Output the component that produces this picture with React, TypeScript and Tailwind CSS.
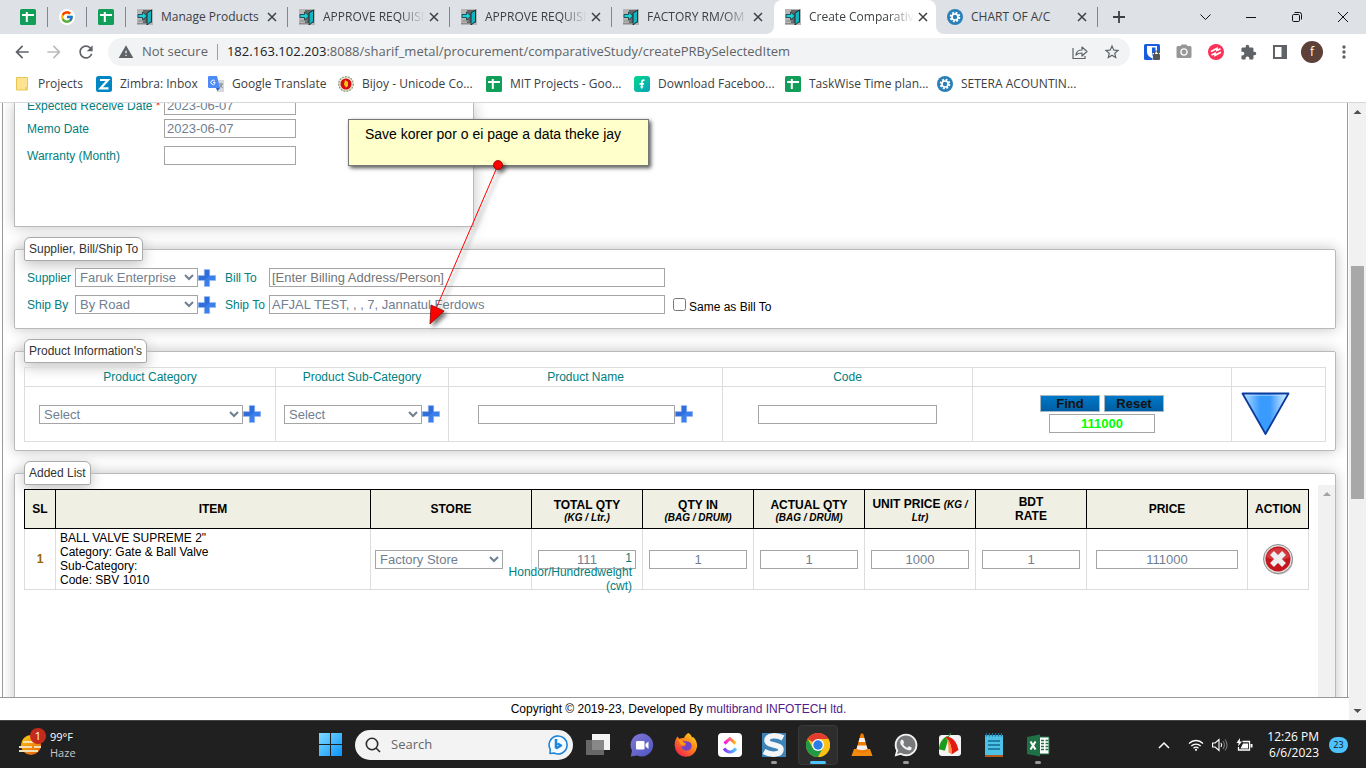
import React from "react";
import { FcGoogle } from "react-icons/fc";
import { FaWhatsapp } from "react-icons/fa";
import {
  MdArrowBack,
  MdArrowForward,
  MdRefresh,
  MdWarning,
  MdStarOutline,
  MdExtension,
  MdMoreVert,
  MdPhotoCamera,
} from "react-icons/md";

const inputClass =
  "h-[19px] border border-[#a5a5a5] bg-white text-[13px] leading-4 text-[#708090] outline-none";

const SheetIcon = () => (
  <svg viewBox="0 0 16 16" className="size-4 shrink-0">
    <rect width="16" height="16" rx="1.5" fill="#119e59" />
    <path d="M2 6h12M6.8 3v10" stroke="#fff" strokeWidth="2" />
  </svg>
);

const DoorIcon = () => (
  <svg viewBox="0 0 16 16" className="size-4 shrink-0">
    <rect width="16" height="16" fill="#b5b5b5" />
    <path d="M6 1h9v13H6z" fill="#666" />
    <path d="M10 4l4.500-3v11.500L10 16z" fill="#12b5bd" stroke="#10262a" strokeWidth=".9" />
    <path d="M1 5.500h4.500V3L10 7l-4.500 4V8.500H1z" fill="#19d3dc" stroke="#17343a" strokeWidth=".8" />
    <path d="M1 12h7M0 14.500h9" stroke="#8a8a8a" />
  </svg>
);

const GearIcon = () => (
  <svg viewBox="0 0 16 16" className="size-4 shrink-0">
    <circle cx="8" cy="8" r="8" fill="#2980b9" />
    <circle cx="8" cy="8" r="4.300" fill="none" stroke="#fff" strokeWidth="2" strokeDasharray="1.900 1.477" />
    <circle cx="8" cy="8" r="3" fill="none" stroke="#fff" strokeWidth="1.600" />
  </svg>
);

const CloseIcon = () => (
  <svg viewBox="0 0 10 10" className="size-[10px]">
    <path d="M1 1l8 8M9 1L1 9" stroke="#3c4043" strokeWidth="1.500" fill="none" />
  </svg>
);

const PlusButton = ({ label }: { label: string }) => (
  <button type="button" aria-label={label} className="size-[18px] shrink-0">
    <svg viewBox="0 0 18 18" className="size-[18px]">
      <path d="M6.300.5h5.400v6h6v5h-6v6H6.300v-6h-6v-5h6z" fill="#3b7fea" stroke="#9dbcf0" strokeWidth=".6" />
      <path d="M6.800 1h4.400v6L6.800 11H.8V7h6z" fill="#2c62cf" opacity=".6" />
    </svg>
  </button>
);

interface TabProps {
  title: string;
  icon: React.ReactNode;
  active?: boolean;
  divider?: boolean;
  faded?: boolean;
}

const Tab: React.FC<TabProps> = ({ title, icon, active, divider, faded }) => (
  <div
    className={`relative flex h-[34px] w-[162px] shrink-0 items-center pl-[11px] pr-[11px] ${
      active ? "rounded-t-lg bg-white" : ""
    }`}
  >
    {active && (
      <>
        <span className="absolute bottom-0 -left-2 size-2 bg-white">
          <span className="block size-2 rounded-br-lg bg-[#dee1e6]" />
        </span>
        <span className="absolute bottom-0 -right-2 size-2 bg-white">
          <span className="block size-2 rounded-bl-lg bg-[#dee1e6]" />
        </span>
      </>
    )}
    {icon}
    <span
      className={`ml-2 flex-1 text-xs whitespace-nowrap text-[#3c4043] ${
        faded ? "[mask-image:linear-gradient(to_right,#000_75%,transparent)]" : ""
      }`}
    >
      {title}
    </span>
    <button type="button" aria-label={`Close ${title}`} className="ml-1">
      <CloseIcon />
    </button>
    {divider && <span className="absolute right-0 h-5 w-px bg-[#80868b]" />}
  </div>
);

const PinnedTab = ({ children }: { children: React.ReactNode }) => (
  <div className="flex h-5 w-[39px] shrink-0 items-center justify-center border-r border-[#80868b]">
    {children}
  </div>
);

const bookmarks = [
  {
    label: "Projects",
    width: "w-20",
    icon: (
      <svg viewBox="0 0 14 16" className="h-4 w-[14px]">
        <path d="M.5 1.500h11V14H.5z" fill="#fee391" stroke="#e9c44f" />
        <path d="M9 11h3v3H9z" fill="#f3cf5b" />
      </svg>
    ),
  },
  {
    label: "Zimbra: Inbox",
    width: "w-28",
    icon: (
      <svg viewBox="0 0 16 16" className="size-4">
        <rect width="16" height="16" rx="2.500" fill="#0087c3" />
        <path d="M4 4h8l-7.500 8.300H12.500" fill="none" stroke="#fff" strokeWidth="2.200" />
      </svg>
    ),
  },
  {
    label: "Google Translate",
    width: "w-[130px]",
    icon: (
      <svg viewBox="0 0 16 16" className="size-4">
        <path d="M6 4h10v12H9z" fill="#d5d8dc" />
        <path d="M1 0h8l3 12H1a1 1 0 0 1-1-1V1a1 1 0 0 1 1-1z" fill="#4c8bf5" />
        <path d="M8 12h4l-2.500 3z" fill="#2a5bc0" />
        <path d="M7 5.200A2.200 2.200 0 1 0 7 7.500V6.400H5" fill="none" stroke="#fff" />
        <path d="M11 8h4M13 7v1M14 8c-.3 2-1.500 3-2.500 3.500M12 9l2.500 3" stroke="#76828e" strokeWidth=".9" fill="none" />
      </svg>
    ),
  },
  {
    label: "Bijoy - Unicode Co...",
    width: "w-[148px]",
    icon: (
      <svg viewBox="0 0 16 16" className="size-4">
        <circle cx="8" cy="8" r="7.300" fill="#e8e3cd" stroke="#8c9a80" strokeWidth="1.200" strokeDasharray="2 1" />
        <circle cx="8" cy="8" r="5.500" fill="#d70b10" />
        <path d="M7 4l3 2v4l-2 1.500-2-3z" fill="#f5c913" />
      </svg>
    ),
  },
  { label: "MIT Projects - Goo...", width: "w-[148px]", icon: <SheetIcon /> },
  {
    label: "Download Faceboo...",
    width: "w-[151px]",
    icon: (
      <svg viewBox="0 0 16 16" className="size-4">
        <defs>
          <linearGradient id="fb" x1="0" y1="0" x2="1" y2="1">
            <stop stopColor="#00d98b" />
            <stop offset="1" stopColor="#0aa1b8" />
          </linearGradient>
        </defs>
        <rect width="16" height="16" rx="3" fill="url(#fb)" />
        <path d="M10.500 4.500C8.500 3.600 7.800 5 7.800 6.500V11M5.500 7.800h4.500" stroke="#fff" strokeWidth="1.700" fill="none" />
        <path d="M6 10.500h3.600L7.800 13z" fill="#fff" />
      </svg>
    ),
  },
  { label: "TaskWise Time plan...", width: "w-[152px]", icon: <SheetIcon /> },
  { label: "SETERA ACOUNTIN...", width: "w-[152px]", icon: <GearIcon /> },
];

const ToolButton = ({ label, children }: { label: string; children: React.ReactNode }) => (
  <button
    type="button"
    aria-label={label}
    className="flex size-8 shrink-0 items-center justify-center text-[#5f6368]"
  >
    {children}
  </button>
);

const Browser = () => (
  <header className="shrink-0 border-b border-[#d5d7da] bg-white font-['Open_Sans',sans-serif]">
    <div className="flex h-[34px] items-center bg-[#dee1e6] pl-[9px]">
      <PinnedTab>
        <SheetIcon />
      </PinnedTab>
      <PinnedTab>
        <span className="flex size-4 items-center justify-center rounded-full bg-white">
          <FcGoogle size={14} />
        </span>
      </PinnedTab>
      <PinnedTab>
        <SheetIcon />
      </PinnedTab>
      <Tab title="Manage Products" icon={<DoorIcon />} divider />
      <Tab title="APPROVE REQUISI" icon={<DoorIcon />} divider faded />
      <Tab title="APPROVE REQUISI" icon={<DoorIcon />} divider faded />
      <Tab title="FACTORY RM/OM" icon={<DoorIcon />} faded />
      <Tab title="Create Comparativ" icon={<DoorIcon />} active faded />
      <Tab title="CHART OF A/C" icon={<GearIcon />} divider />
      <button type="button" aria-label="New tab" className="flex w-[42px] shrink-0 justify-center">
        <svg viewBox="0 0 12 12" className="size-3">
          <path d="M6 0v12M0 6h12" stroke="#3c4043" strokeWidth="1.800" />
        </svg>
      </button>
      <div className="ml-auto flex h-7 items-center">
        <button type="button" aria-label="Search tabs" className="flex w-[46px] justify-center">
          <svg viewBox="0 0 11 7" className="h-[7px] w-[11px]">
            <path d="M.5.5l5 5 5-5" stroke="#111" fill="none" />
          </svg>
        </button>
        <button type="button" aria-label="Minimize" className="flex w-[46px] justify-center">
          <svg viewBox="0 0 10 10" className="size-[10px]">
            <path d="M0 5.500h10" stroke="#111" />
          </svg>
        </button>
        <button type="button" aria-label="Restore" className="flex w-[46px] justify-center">
          <svg viewBox="0 0 10 10" className="size-[10px]" fill="none" stroke="#111">
            <rect x=".5" y="2.500" width="7" height="7" rx="1.200" />
            <path d="M2.500.5h5a2 2 0 0 1 2 2v5" />
          </svg>
        </button>
        <button type="button" aria-label="Close window" className="flex w-[46px] justify-center">
          <svg viewBox="0 0 10 10" className="size-[10px]">
            <path d="M0 0l10 10M10 0L0 10" stroke="#111" />
          </svg>
        </button>
      </div>
    </div>

    <div className="flex h-9 items-center pl-[6px] pr-[6px]">
      <ToolButton label="Back">
        <MdArrowBack size={20} />
      </ToolButton>
      <ToolButton label="Forward">
        <MdArrowForward size={20} className="text-[#babcbe]" />
      </ToolButton>
      <ToolButton label="Reload">
        <MdRefresh size={20} />
      </ToolButton>
      <div className="mx-[6px] flex h-7 flex-1 items-center rounded-full bg-[#f1f3f4] pl-[10px] pr-[2px] text-[13px] text-[#5f6368]">
        <MdWarning size={16} />
        <span className="ml-2">Not secure</span>
        <span className="mx-[9px] h-4 w-px bg-[#9aa0a6]" />
        <span className="flex-1 whitespace-nowrap">
          <span className="text-[#202124]">182.163.102.203</span>
          :8088/sharif_metal/procurement/comparativeStudy/createPRBySelectedItem
        </span>
        <ToolButton label="Share">
          <svg viewBox="0 0 16 16" className="size-4" fill="none" stroke="#5f6368" strokeWidth="1.200">
            <path d="M1 4v10.500h12V12" />
            <path d="M4 11c.3-3.500 2.500-5 6-5V3l5 4.500L10 12V9c-3 0-4.600.5-6 2z" strokeLinejoin="round" />
          </svg>
        </ToolButton>
        <ToolButton label="Bookmark">
          <MdStarOutline size={18} />
        </ToolButton>
      </div>
      <ToolButton label="Password manager">
        <svg viewBox="0 0 16 16" className="size-4">
          <rect width="16" height="16" rx="1.500" fill="#175ddc" />
          <path d="M3 2h10v6c0 3.500-3 5.300-5 6.200C6 13.300 3 11.500 3 8z" fill="#fff" />
          <path d="M8 3.500h3.500V8c0 2-1.500 3.500-3.500 4.500z" fill="#175ddc" />
          <path d="M8.500 9H16v7H8.500z" fill="#fff" />
          <rect x="9" y="10" width="7" height="6" rx="1" fill="#555" />
          <path d="M10.500 10.500V9a2 2 0 0 1 4 0v1.500" fill="none" stroke="#555" strokeWidth="1.200" />
        </svg>
      </ToolButton>
      <ToolButton label="Screenshot">
        <MdPhotoCamera size={18} className="text-[#979797]" />
      </ToolButton>
      <ToolButton label="Recorder">
        <svg viewBox="0 0 16 16" className="size-4">
          <circle cx="8" cy="8" r="8" fill="#fb3158" />
          <path d="M3 7.500L9 4.500v2l3.500-1.700M3.500 11L7 9.300v2l6-3" stroke="#fff" strokeWidth="1.700" fill="none" />
        </svg>
      </ToolButton>
      <ToolButton label="Extensions">
        <MdExtension size={17} />
      </ToolButton>
      <ToolButton label="Side panel">
        <svg viewBox="0 0 14 14" className="size-[14px]">
          <path d="M1 1h12v12H1z" fill="none" stroke="#5f6368" strokeWidth="2" />
          <path d="M8.500 1H13v12H8.500z" fill="#5f6368" />
        </svg>
      </ToolButton>
      <ToolButton label="Profile">
        <span className="flex size-[22px] items-center justify-center rounded-full bg-[#5d4037] text-xs text-white">
          f
        </span>
      </ToolButton>
      <ToolButton label="Menu">
        <MdMoreVert size={20} />
      </ToolButton>
    </div>

    <nav className="flex h-8 items-center overflow-hidden pb-1 pl-4">
      {bookmarks.map((b) => (
        <a
          key={b.label}
          href="#"
          className={`flex shrink-0 items-center gap-2 text-xs whitespace-nowrap text-[#3c4043] ${b.width}`}
        >
          {b.icon}
          {b.label}
        </a>
      ))}
    </nav>
  </header>
);

interface PanelProps {
  title: string;
  className: string;
  children: React.ReactNode;
}

const Panel: React.FC<PanelProps> = ({ title, className, children }) => (
  <fieldset
    className={`rounded-xs border border-[#b9b9b9] bg-white pl-[9px] shadow-[0_0_14px_#c2c2c2] ${className}`}
  >
    <legend className="h-6 rounded-t-md rounded-b-xs border border-[#aaa] bg-white px-1 text-xs leading-[22px] text-[#333] shadow-[0_4px_14px_#c2c2c2]">
      {title}
    </legend>
    {children}
  </fieldset>
);

const DateRow = ({ id, label, value, required }: { id: string; label: string; value: string; required?: boolean }) => (
  <div className="flex items-center">
    <label htmlFor={id} className="w-[137px] text-xs whitespace-nowrap text-[#008080]">
      {label}
      {required && <span className="text-red-500"> *</span>}
    </label>
    <input id={id} defaultValue={value} className={`${inputClass} w-[132px] px-[2px]`} />
  </div>
);

const SupplierPanel = () => (
  <Panel title="Supplier, Bill/Ship To" className="pt-[3px] pb-[10px]">
    <div className="flex h-[27px] items-center pl-[3px] text-xs text-[#008080]">
      <label htmlFor="supplier" className="w-12">
        Supplier
      </label>
      <select id="supplier" className={`${inputClass} w-[123px]`}>
        <option>Faruk Enterprise</option>
      </select>
      <PlusButton label="Add supplier" />
      <label htmlFor="bill" className="ml-[9px] w-11">
        Bill To
      </label>
      <input
        id="bill"
        placeholder="[Enter Billing Address/Person]"
        className={`${inputClass} w-[396px] px-[2px] placeholder:text-[#757575]`}
      />
    </div>
    <div className="flex h-[27px] items-center pl-[3px] text-xs text-[#008080]">
      <label htmlFor="shipBy" className="w-12">
        Ship By
      </label>
      <select id="shipBy" className={`${inputClass} w-[123px]`}>
        <option>By Road</option>
      </select>
      <PlusButton label="Add ship by" />
      <label htmlFor="ship" className="ml-[9px] w-11">
        Ship To
      </label>
      <input
        id="ship"
        defaultValue="AFJAL TEST, , , 7, Jannatul Ferdows"
        className={`${inputClass} w-[396px] px-[2px]`}
      />
      <input id="same" type="checkbox" className="ml-2 size-[13px]" />
      <label htmlFor="same" className="ml-[3px] pt-1 text-black">
        Same as Bill To
      </label>
    </div>
  </Panel>
);

const ProductPanel = () => (
  <Panel title="Product Information's" className="pt-1 pr-[9px] pb-2">
    <table className="w-full table-fixed border-collapse text-xs text-[#008080] [&_td]:border [&_td]:border-[#ddd] [&_td]:p-0 [&_th]:border [&_th]:border-[#ddd] [&_th]:font-normal">
      <colgroup>
        <col className="w-[251px]" />
        <col className="w-[173px]" />
        <col />
        <col className="w-[250px]" />
        <col className="w-[259px]" />
        <col className="w-[94px]" />
      </colgroup>
      <thead>
        <tr className="h-[19px] leading-4">
          <th>Product Category</th>
          <th>Product Sub-Category</th>
          <th>Product Name</th>
          <th>Code</th>
          <th />
          <th />
        </tr>
      </thead>
      <tbody>
        <tr className="h-[55px]">
          <td>
            <div className="flex justify-center">
              <select aria-label="Product Category" className={`${inputClass} w-[204px]`}>
                <option>Select</option>
              </select>
              <PlusButton label="Add category" />
            </div>
          </td>
          <td>
            <div className="flex justify-center">
              <select aria-label="Product Sub-Category" className={`${inputClass} w-[138px]`}>
                <option>Select</option>
              </select>
              <PlusButton label="Add sub-category" />
            </div>
          </td>
          <td>
            <div className="flex justify-center">
              <input aria-label="Product Name" className={`${inputClass} w-[197px] px-[2px]`} />
              <PlusButton label="Add product" />
            </div>
          </td>
          <td>
            <div className="flex justify-center">
              <input aria-label="Code" className={`${inputClass} w-[179px] px-[2px]`} />
            </div>
          </td>
          <td>
            <div className="flex flex-col items-center gap-[2px]">
              <div className="flex gap-1">
                {["Find", "Reset"].map((name) => (
                  <button
                    key={name}
                    type="button"
                    className="h-[17px] w-[60px] border border-[#a5b8c8] bg-linear-to-b from-[#0078c8] to-[#005fa3] text-[13px] leading-[15px] font-bold text-[#111]"
                  >
                    {name}
                  </button>
                ))}
              </div>
              <input
                aria-label="Total"
                defaultValue="111000"
                className="h-[19px] w-[106px] border border-[#a5a5a5] text-center text-[13px] leading-4 font-bold text-[#00ff00]"
              />
            </div>
          </td>
          <td>
            <button type="button" aria-label="Add to list" className="ml-[9px] block">
              <svg viewBox="0 0 50 44" className="h-11 w-[50px]">
                <defs>
                  <linearGradient id="tri">
                    <stop stopColor="#b9e2ff" />
                    <stop offset=".38" stopColor="#3a9bff" />
                    <stop offset=".6" stopColor="#3a9bff" />
                    <stop offset="1" stopColor="#e8f5ff" />
                  </linearGradient>
                </defs>
                <path d="M1.500 1.500h46L24.500 42z" fill="url(#tri)" stroke="#0b3b9e" strokeWidth="1.800" strokeLinejoin="round" />
                <path d="M4.500 3.300h40" stroke="#bfe2ff" opacity=".7" />
              </svg>
            </button>
          </td>
        </tr>
      </tbody>
    </table>
  </Panel>
);

const qtyFields = [
  { name: "Qty in", value: "1" },
  { name: "Actual qty", value: "1" },
  { name: "Unit price", value: "1000" },
  { name: "BDT rate", value: "1" },
];

const UnitHeader = ({ title, unit }: { title: string; unit: string }) => (
  <th>
    <span className="block pt-[3px]">{title}</span>
    <i className="block text-[10px] leading-3">{unit}</i>
  </th>
);

const AddedListPanel = () => (
  <Panel title="Added List" className="h-80">
    <div className="flex h-72">
      <div className="mr-[9px] flex-1 pt-1">
        <table className="w-full table-fixed border-collapse text-xs leading-[14px] text-black [&_td]:border [&_td]:border-[#ddd] [&_th]:border [&_th]:border-black [&_th]:p-0">
          <colgroup>
            <col className="w-[31px]" />
            <col />
            <col className="w-[161px]" />
            <col className="w-[111px]" />
            <col className="w-[111px]" />
            <col className="w-[111px]" />
            <col className="w-[111px]" />
            <col className="w-[111px]" />
            <col className="w-[161px]" />
            <col className="w-[61px]" />
          </colgroup>
          <thead className="bg-[#efefe3]">
            <tr className="h-[39px]">
              <th>SL</th>
              <th>ITEM</th>
              <th>STORE</th>
              <UnitHeader title="TOTAL QTY" unit="(KG / Ltr.)" />
              <UnitHeader title="QTY IN" unit="(BAG / DRUM)" />
              <UnitHeader title="ACTUAL QTY" unit="(BAG / DRUM)" />
              <th>
                <span className="block pt-[3px] whitespace-nowrap">
                  UNIT PRICE <i className="text-[10px]">(KG /</i>
                </span>
                <i className="block text-[10px] leading-3">Ltr)</i>
              </th>
              <th>
                BDT
                <br />
                RATE
              </th>
              <th>PRICE</th>
              <th>ACTION</th>
            </tr>
          </thead>
          <tbody>
            <tr className="h-[61px] text-center">
              <td className="font-bold text-[#966400]">1</td>
              <td className="px-1 text-left">
                BALL VALVE SUPREME 2&quot;
                <br />
                Category: Gate &amp; Ball Valve
                <br />
                Sub-Category:
                <br />
                Code: SBV 1010
              </td>
              <td className="px-1 text-left">
                <select aria-label="Store" className={`${inputClass} block w-32`}>
                  <option>Factory Store</option>
                </select>
              </td>
              <td>
                <div className="relative">
                  <input
                    aria-label="Total qty"
                    defaultValue="111"
                    className={`${inputClass} mx-auto block w-[98px] text-center`}
                  />
                  <div className="absolute top-px right-[10px] text-right text-[#008080]">
                    1<br />
                    Hondor/Hundredweight
                    <br />
                    (cwt)
                  </div>
                </div>
              </td>
              {qtyFields.map((f) => (
                <td key={f.name}>
                  <input
                    aria-label={f.name}
                    defaultValue={f.value}
                    className={`${inputClass} mx-auto block w-[98px] text-center`}
                  />
                </td>
              ))}
              <td>
                <input
                  aria-label="Price"
                  defaultValue="111000"
                  className={`${inputClass} mx-auto block w-[142px] text-center`}
                />
              </td>
              <td className="p-0">
                <button type="button" aria-label="Remove item" className="mx-auto block">
                  <svg viewBox="0 0 32 32" className="size-8">
                    <circle cx="16.500" cy="17" r="14.500" fill="#bbb" />
                    <circle cx="16" cy="16" r="14.500" fill="#ddd" stroke="#8e8e8e" />
                    <circle cx="16" cy="16" r="12.500" fill="#c4161c" />
                    <path d="M4 14a12.500 12.500 0 0 1 24 0c-7 4-17 4-24 0z" fill="#e0595c" opacity=".55" />
                    <path d="M10 10l12 12M22 10L10 22" stroke="#eee" strokeWidth="5.500" />
                  </svg>
                </button>
              </td>
            </tr>
          </tbody>
        </table>
      </div>
      <div className="flex w-[17px] justify-center bg-[#f1f1f1] pt-[7px]" aria-hidden="true">
        <svg viewBox="0 0 8 4" className="h-1 w-2">
          <path d="M0 4l4-4 4 4z" fill="#a3a3a3" />
        </svg>
      </div>
    </div>
  </Panel>
);

const Annotation = () => (
  <>
    <div className="absolute top-4 left-[348px] h-[47px] w-[301px] border border-[#777] bg-[#ffffcc] pl-4 pt-1 text-sm text-black shadow-[2px_2px_4px_#555]">
      Save korer por o ei page a data theke jay
    </div>
    <svg viewBox="0 0 90 180" className="absolute top-[52px] left-[420px] h-[180px] w-[90px]">
      <g className="drop-shadow-[3px_3px_2px_#0008]">
        <path d="M78 10L15 156" stroke="#f00" />
        <circle cx="78" cy="10" r="4.500" fill="#f00" stroke="#8c0000" strokeWidth=".8" />
        <path d="M10 169l1-19 13 6z" fill="#f00" stroke="#8c0000" strokeWidth=".8" />
      </g>
    </svg>
  </>
);

const PageScrollbar = () => (
  <div className="flex w-[17px] shrink-0 flex-col items-center bg-[#f1f1f1]" aria-hidden="true">
    <svg viewBox="0 0 17 17" className="size-[17px] shrink-0">
      <path d="M4.500 11l4-4 4 4z" fill="#505050" />
    </svg>
    <div className="w-full flex-1">
      <div className="h-1/4" />
      <div className="mx-auto h-2/5 w-[13px] bg-[#a8a8a8]" />
    </div>
    <svg viewBox="0 0 17 17" className="size-[17px] shrink-0">
      <path d="M4.500 6l4 4 4-4z" fill="#505050" />
    </svg>
  </div>
);

const TaskIcon = ({
  label,
  state,
  children,
}: {
  label: string;
  state?: "open" | "active";
  children: React.ReactNode;
}) => (
  <button
    type="button"
    aria-label={label}
    className="relative flex h-12 w-11 shrink-0 items-center justify-center"
  >
    <span
      className={`flex size-10 items-center justify-center rounded ${
        state === "active" ? "border border-[#393939] bg-[#2d2d2d]" : ""
      }`}
    >
      {children}
    </span>
    {state === "open" && <span className="absolute bottom-[5px] h-[3px] w-[6px] rounded-full bg-[#9a9a9a]" />}
    {state === "active" && <span className="absolute bottom-[5px] h-[3px] w-4 rounded-full bg-[#4cc2ff]" />}
  </button>
);

const Taskbar = () => (
  <footer className="flex h-12 shrink-0 items-center border-t border-[#444] bg-[#202020] font-['Open_Sans',sans-serif] text-white">
    <div className="flex flex-1 items-center pl-[18px]">
      <svg viewBox="0 0 28 30" className="mb-[6px] h-[30px] w-7">
        <defs>
          <linearGradient id="sun" x1="0" y1="0" x2=".6" y2="1">
            <stop stopColor="#fcd116" />
            <stop offset="1" stopColor="#e96a0b" />
          </linearGradient>
        </defs>
        <circle cx="13" cy="18" r="10" fill="url(#sun)" />
        <path d="M5 15h15M1 20h13M16 20h7M1 24h19" stroke="#f5deb0" strokeWidth="1.800" />
        <circle cx="20" cy="9" r="8" fill="#c42b1c" />
        <text x="20" y="13" fontSize="11" fill="#fff" textAnchor="middle">
          1
        </text>
      </svg>
      <div className="ml-1 text-[11px] leading-4">
        <div>99°F</div>
        <div className="text-[#c8c8c8]">Haze</div>
      </div>
    </div>

    <div className="flex shrink-0 items-center pl-[2px]">
      <TaskIcon label="Start">
        <svg viewBox="0 0 23 23" className="size-[23px]">
          <defs>
            <linearGradient id="win" x1="0" y1="0" x2="1" y2="1">
              <stop stopColor="#7fdcff" />
              <stop offset="1" stopColor="#0a93ff" />
            </linearGradient>
          </defs>
          <path d="M0 0h11v11H0zM12 0h11v11H12zM0 12h11v11H0zM12 12h11v11H12z" fill="url(#win)" />
        </svg>
      </TaskIcon>
      <div className="mx-[3px] flex h-[30px] w-[218px] items-center rounded-full bg-[#f3f3f3] pr-1 pl-[10px]">
        <svg viewBox="0 0 16 16" className="size-4 shrink-0" fill="none" stroke="#2b2b2b" strokeWidth="1.600">
          <circle cx="7" cy="7" r="5.700" />
          <path d="M11 11l4 4" />
        </svg>
        <input
          aria-label="Search"
          placeholder="Search"
          className="ml-[10px] min-w-0 flex-1 text-[13px] outline-none placeholder:text-[#666]"
        />
        <svg viewBox="0 0 22 22" className="size-[22px] shrink-0">
          <path d="M3 19.500l.3-4A9 9 0 1 1 7 19z" fill="#f5fbff" stroke="#1d84d8" strokeWidth="1.600" strokeLinejoin="round" />
          <path d="M9 5v9.500M9 14.500l5-3-3.500-2" fill="none" stroke="#1b86dc" strokeWidth="2.500" strokeLinejoin="round" />
        </svg>
      </div>
      <TaskIcon label="Task view">
        <svg viewBox="0 0 24 22" className="h-[22px] w-6">
          <path d="M6 0h18v16H6z" fill="#f3f3f3" />
          <path d="M0 6h18v15H0z" fill="#747474" opacity=".85" />
        </svg>
      </TaskIcon>
      <TaskIcon label="Chat">
        <svg viewBox="0 0 24 24" className="size-6">
          <defs>
            <linearGradient id="chat" x1="0" y1="0" x2="1" y2="1">
              <stop stopColor="#8178d4" />
              <stop offset="1" stopColor="#4f55c4" />
            </linearGradient>
          </defs>
          <path d="M12 .5A11.500 11.500 0 1 1 7 22.500L.8 23.500 2 17.500A11.500 11.500 0 0 1 12 .5z" fill="url(#chat)" />
          <rect x="6" y="8" width="8.500" height="8.500" rx="1.300" fill="#fff" />
          <path d="M15.500 11l3-2.500v7.500l-3-2.500z" fill="#fff" />
        </svg>
      </TaskIcon>
      <TaskIcon label="Firefox">
        <svg viewBox="0 0 24 24" className="size-6">
          <defs>
            <linearGradient id="fox" x1="1" y1="0" x2=".2" y2="1">
              <stop stopColor="#ffe226" />
              <stop offset=".45" stopColor="#ff8a16" />
              <stop offset="1" stopColor="#f0204f" />
            </linearGradient>
          </defs>
          <path d="M14.500 0c2 1 3 3 3.500 4.200 1-.1 1.500 0 1.500 0C22 7 23.500 10 23 14a11.200 11.200 0 0 1-22.300-1C.5 9 1.500 6 3.500 3.500L5.500 6C7 4.800 8.500 4.800 10 5c1-2.500 2.500-4 4.500-5z" fill="url(#fox)" />
          <path d="M8.500 8c3 .7 7.500-.5 9 3.500 1 5-4 7.500-7.500 5.500-2-1-2.500-2.500-2.500-4 2 1 3.500.5 4.500-1.500-2-.5-3.500-1.500-3.500-3.500z" fill="#7542c4" />
          <path d="M4 6c2 0 4 1 5 3l3 1.500c-1 1.500-3 1.500-4.500 2-1-2-3-4-3.500-6.500z" fill="#ff9a1c" />
        </svg>
      </TaskIcon>
      <TaskIcon label="ClickUp">
        <svg viewBox="0 0 24 24" className="size-6" fill="none" strokeWidth="3">
          <defs>
            <linearGradient id="cu1">
              <stop stopColor="#ff02f0" />
              <stop offset="1" stopColor="#ffc800" />
            </linearGradient>
            <linearGradient id="cu2">
              <stop stopColor="#8930fd" />
              <stop offset="1" stopColor="#49ccf9" />
            </linearGradient>
          </defs>
          <rect width="24" height="24" rx="4" fill="#fff" />
          <path d="M6.500 10.500L12 5.700l5.500 4.800" stroke="url(#cu1)" />
          <path d="M6 15.500c3.500 4.500 8.500 4.500 12 0" stroke="url(#cu2)" />
        </svg>
      </TaskIcon>
      <TaskIcon label="Snagit" state="open">
        <svg viewBox="0 0 24 24" className="size-6">
          <rect width="24" height="24" fill="#3d83b8" />
          <path d="M21 5C15 1.500 5 2 5 7.500S19 11 19 16.500 9 22.500 2 18.500" fill="none" stroke="#f3f5f7" strokeWidth="5.500" />
        </svg>
      </TaskIcon>
      <TaskIcon label="Chrome" state="active">
        <svg viewBox="0 0 24 24" className="size-6">
          <circle cx="12" cy="12" r="12" fill="#fbc116" />
          <path d="M12 12L1.600 6A12 12 0 0 1 22.400 6z" fill="#e33b2e" />
          <path d="M1.600 6A12 12 0 0 0 12 24l5.200-9L12 12 6.800 15z" fill="#229a45" />
          <path d="M12 6h10.400A12 12 0 0 1 12 24l5.200-9z" fill="#fbc116" />
          <circle cx="12" cy="12" r="6" fill="#fff" />
          <circle cx="12" cy="12" r="4.700" fill="#2a7de8" />
        </svg>
      </TaskIcon>
      <TaskIcon label="VLC">
        <svg viewBox="0 0 22 24" className="h-6 w-[22px]">
          <path d="M3 16h16l2.500 7H.5z" fill="#f28a10" />
          <path d="M11 .5c1 0 1.300.5 1.500 1L17 18c-2 2.500-10 2.500-12 0L9.500 1.500c.2-.5.500-1 1.500-1z" fill="#f07d00" />
          <path d="M8.700 5h4.600l1.200 4h-7zM6.500 12.500h9l1 3.500c-3 1.500-8 1.500-11 0z" fill="#f1f1f1" />
        </svg>
      </TaskIcon>
      <TaskIcon label="WhatsApp" state="open">
        <span className="relative flex size-6 items-center justify-center">
          <svg viewBox="0 0 24 24" className="absolute size-6">
            <circle cx="12" cy="12" r="11" fill="#77797b" />
          </svg>
          <FaWhatsapp size={26} className="relative shrink-0 text-[#f2f2f2]" />
        </span>
      </TaskIcon>
      <TaskIcon label="FastStone Capture">
        <svg viewBox="0 0 24 24" className="size-6">
          <rect x="1" y="2" width="22" height="21" rx="3" fill="#f4f4f4" />
          <path d="M12 0l1.500.5L11 3.500l-4 14C5 17.500 2.500 16 1 16.500 1 10 5 4 10.500 3z" fill="#1c9b1c" />
          <path d="M7.500 4c6-1 11 4 13 13l-7 4.500C14 14 12 8 7.500 4z" fill="#e31a12" />
          <path d="M7.500 4c3 3 6.500 8 6.500 17l-3.500-1.500C11 13 9.500 7 7.500 4z" fill="#ff8d3c" />
        </svg>
      </TaskIcon>
      <TaskIcon label="Notepad">
        <svg viewBox="0 0 20 24" className="h-6 w-5">
          <path d="M1 2h18v20H1z" fill="#4cc3e6" />
          <path d="M1 22h18v2H1z" fill="#b3571b" />
          <path d="M2.500 0v3.500M5.500 0v3.500M8.500 0v3.500M11.500 0v3.500M14.500 0v3.500M17.500 0v3.500" stroke="#1b6f9a" strokeWidth="1.200" />
          <path d="M4 8h12M4 12h12M4 16h12" stroke="#156a91" strokeWidth="1.500" />
        </svg>
      </TaskIcon>
      <TaskIcon label="Excel" state="open">
        <svg viewBox="0 0 24 24" className="size-6">
          <path d="M12 4h11v17H12z" fill="#fff" stroke="#1f7145" />
          <path d="M15 7.500h3M19.500 7.500h3M15 10.500h3M19.500 10.500h3M15 13.500h3M19.500 13.500h3M15 16.500h3M19.500 16.500h3" stroke="#1f7145" strokeWidth="1.500" />
          <path d="M1 4l13-2.500v22L1 21z" fill="#1f7145" />
          <path d="M4.500 8.500l5 8M9.500 8.500l-5 8" stroke="#fff" strokeWidth="2" />
        </svg>
      </TaskIcon>
    </div>

    <div className="flex flex-1 items-center justify-end pr-[18px]">
      <svg viewBox="0 0 12 8" className="h-2 w-3" fill="none" stroke="#fff" strokeWidth="1.500">
        <path d="M1 7l5-5 5 5" />
      </svg>
      <svg viewBox="0 0 16 12" className="ml-[18px] h-3 w-4" fill="none" stroke="#fff" strokeWidth="1.300">
        <path d="M1 4.500c4-4 10-4 14 0M3.300 7c2.700-2.600 6.700-2.600 9.400 0M5.500 9.300c1.500-1.400 3.500-1.400 5 0" />
        <circle cx="8" cy="10.800" r="1.100" fill="#fff" stroke="none" />
      </svg>
      <svg viewBox="0 0 16 14" className="ml-2 h-[14px] w-4" fill="none" stroke="#fff" strokeWidth="1.100">
        <path d="M.6 5h2.600L7 1.500v11L3.200 9H.6z" />
        <path d="M9 5c.8 1.200.8 2.800 0 4" />
        <path d="M11 3c1.800 2.500 1.800 5.500 0 8M13 1.500c2.600 3.500 2.600 7.500 0 11" stroke="#777" />
      </svg>
      <svg viewBox="0 0 17 14" className="ml-2 h-[14px] w-[17px]" fill="none" stroke="#fff" strokeWidth="1.300">
        <path d="M6.500 3.500h7v8.500h-11V9" />
        <path d="M7 5.500h5v5H4.500z" fill="#fff" stroke="none" />
        <path d="M15.500 6v3.500" strokeWidth="2" />
        <path d="M4 0L.5 5h2.200L2 8.500 6 3.500H3.800z" fill="#fff" stroke="none" />
      </svg>
      <div className="ml-[14px] text-right text-xs leading-4 whitespace-nowrap">
        <div>12:26 PM</div>
        <div>6/6/2023</div>
      </div>
      <span className="ml-[10px] flex h-4 w-[19px] items-center justify-center rounded-full bg-[#4cc2ff] text-[9px] text-[#111]">
        23
      </span>
    </div>
  </footer>
);

export default function App() {
  return (
    <div className="flex h-screen flex-col overflow-hidden bg-white font-['Liberation_Sans',Arial,sans-serif]">
      <Browser />
      <div className="flex min-h-0 flex-1">
        <div className="flex min-w-0 flex-1 flex-col">
          <main className="relative min-h-0 flex-1 overflow-hidden pr-px pl-[2px]">
            <div className="flex flex-col gap-[10px] border-x border-[#999] px-[11px]">
              <div className="flex h-[124px] w-[460px] flex-col border border-t-0 border-[#b9b9b9] bg-white pl-3 shadow-[0_0_14px_#c2c2c2]">
                <div className="-mt-[7px] flex flex-col">
                  <DateRow id="receive" label="Expected Receive Date" value="2023-06-07" required />
                  <div className="mt-1">
                    <DateRow id="memo" label="Memo Date" value="2023-06-07" />
                  </div>
                  <div className="mt-2">
                    <DateRow id="warranty" label="Warranty (Month)" value="" />
                  </div>
                </div>
              </div>
              <SupplierPanel />
              <ProductPanel />
              <AddedListPanel />
            </div>
            <Annotation />
          </main>
          <div className="shrink-0 border-t border-[#999] py-[3px] pl-2 text-center text-xs text-black">
            Copyright © 2019-23, Developed By{" "}
            <a href="#" className="text-[#551a8b]">
              multibrand INFOTECH ltd.
            </a>
          </div>
        </div>
        <PageScrollbar />
      </div>
      <Taskbar />
    </div>
  );
}
